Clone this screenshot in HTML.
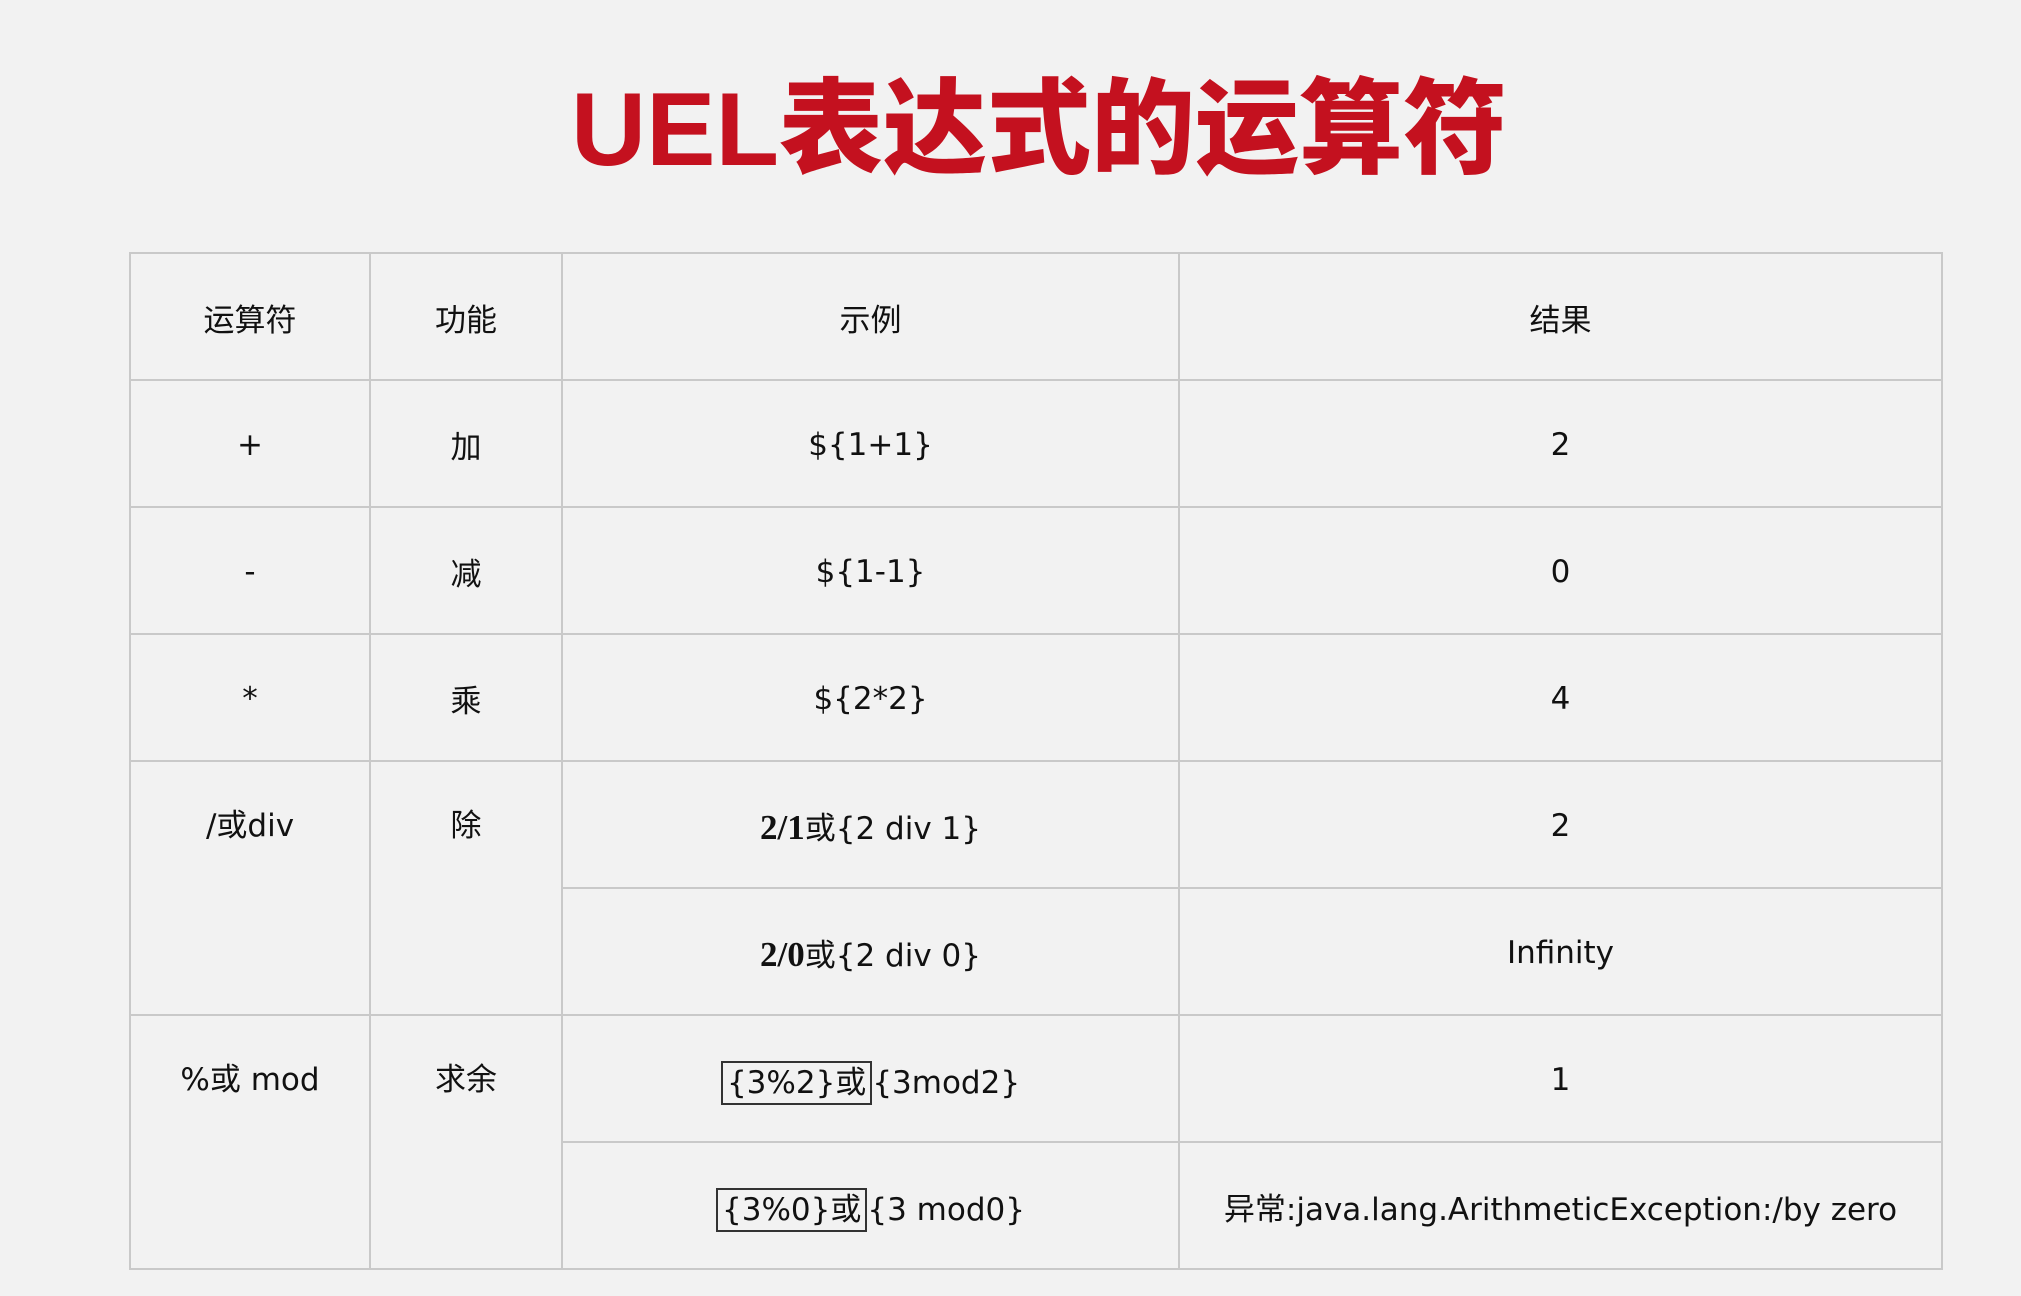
<!DOCTYPE html>
<html><head><meta charset="utf-8"><style>
html,body{margin:0;padding:0;background:#f2f2f2;}
body{width:2021px;height:1296px;position:relative;overflow:hidden;font-family:"DejaVu Sans","Noto Sans CJK SC",sans-serif;color:#111;}
.title{position:absolute;left:0;width:2078px;top:60px;text-align:center;font-family:"Liberation Sans","Noto Sans CJK SC",sans-serif;font-weight:900;font-size:104px;color:#c4111f;line-height:140px;}
table{position:absolute;left:129px;top:252px;border-collapse:collapse;table-layout:fixed;}
tr{height:127px;}
td{border:2px solid #c9c9c9;text-align:center;font-size:31px;padding:2px 0 0 0;vertical-align:middle;}
td.top{vertical-align:top;padding-top:38px;}
.ser{font-family:"Liberation Serif","Noto Sans CJK SC",serif;font-weight:bold;font-size:35px;}
.box{border:2px solid #333;padding:2px 4px;}
</style></head><body>
<div class="title">UEL表达式的运算符</div>
<table>
<colgroup><col style="width:240px"><col style="width:192px"><col style="width:617px"><col style="width:763px"></colgroup>
<tr><td>运算符</td><td>功能</td><td>示例</td><td>结果</td></tr>
<tr><td>+</td><td>加</td><td>${1+1}</td><td>2</td></tr>
<tr><td>-</td><td>减</td><td>${1-1}</td><td>0</td></tr>
<tr><td>*</td><td>乘</td><td>${2*2}</td><td>4</td></tr>
<tr><td rowspan="2" class="top">/或div</td><td rowspan="2" class="top">除</td><td><span class="ser">2/1</span>或{2 div 1}</td><td>2</td></tr>
<tr><td><span class="ser">2/0</span>或{2 div 0}</td><td>Infinity</td></tr>
<tr><td rowspan="2" class="top">%或 mod</td><td rowspan="2" class="top">求余</td><td><span class="box">{3%2}或</span>{3mod2}</td><td>1</td></tr>
<tr><td><span class="box">{3%0}或</span>{3 mod0}</td><td>异常:java.lang.ArithmeticException:/by zero</td></tr>
</table>
</body></html>
